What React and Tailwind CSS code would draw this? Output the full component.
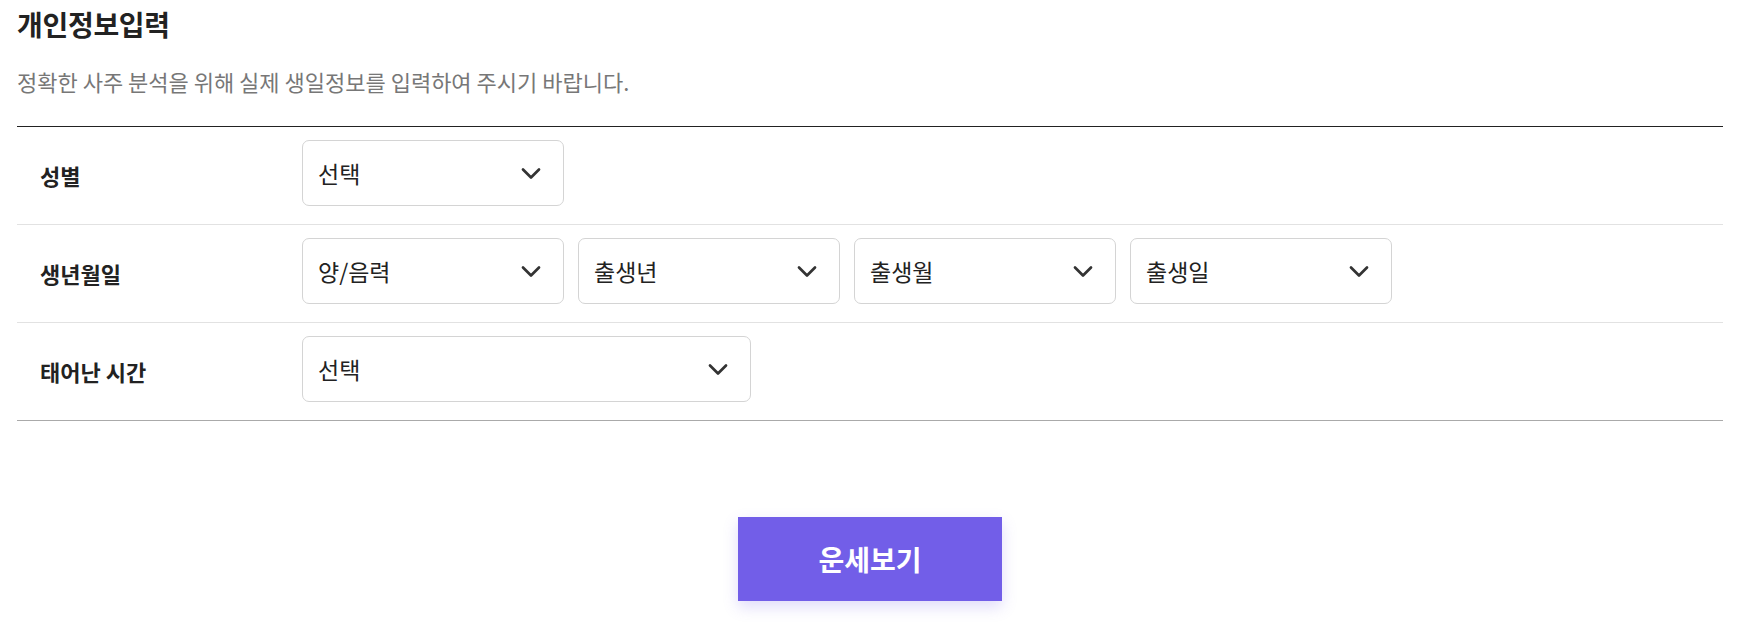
import React from "react";

const font = { fontFamily: '"Noto Sans CJK KR", "Noto Sans", sans-serif' };

function Chevron() {
  return (
    <svg width="20" height="13" viewBox="0 0 20 13" fill="none" className="shrink-0">
      <path d="M2 2.5 L10 10.5 L18 2.5" stroke="#333" strokeWidth="2.7" strokeLinecap="round" strokeLinejoin="round" />
    </svg>
  );
}

function Select({ label, className }) {
  return (
    <div className={`mb-[5px] flex h-[66px] items-center justify-between rounded-[7px] border border-[#d4d4d4] bg-white pl-[15px] pr-[22px] ${className}`}>
      <span className="text-[23px] text-[#222]">{label}</span>
      <Chevron />
    </div>
  );
}

function Row({ label, children, last }) {
  return (
    <div className={`flex h-[98px] items-center border-b ${last ? "border-[#aaaaaa]" : "border-[#e2e2e2]"}`}>
      <div className="w-[285px] shrink-0 pl-[23px] text-[22px] font-semibold text-[#222]">{label}</div>
      <div className="flex gap-[14px]">{children}</div>
    </div>
  );
}

export default function App() {
  return (
    <div className="min-h-[641px] bg-white pl-[17px] pr-[33px]" style={font}>
      <h2 className="pt-[4px] text-[28px] font-semibold leading-[40px] tracking-[-0.3px] text-[#222]">개인정보입력</h2>
      <p className="mt-[22px] text-[22px] leading-[30px] text-[#777]">정확한 사주 분석을 위해 실제 생일정보를 입력하여 주시기 바랍니다.</p>
      <div className="mt-[30px] border-t border-[#222]">
        <Row label="성별">
          <Select label="선택" className="w-[262px]" />
        </Row>
        <Row label="생년월일">
          <Select label="양/음력" className="w-[262px]" />
          <Select label="출생년" className="w-[262px]" />
          <Select label="출생월" className="w-[262px]" />
          <Select label="출생일" className="w-[262px]" />
        </Row>
        <Row label="태어난 시간" last>
          <Select label="선택" className="w-[449px]" />
        </Row>
      </div>
      <div className="flex justify-center pt-[96px]">
        <button className="h-[84px] w-[264px] bg-[#725ee8] text-[28px] font-bold text-white shadow-[0_6px_14px_rgba(114,94,232,0.22)]">
          운세보기
        </button>
      </div>
    </div>
  );
}
